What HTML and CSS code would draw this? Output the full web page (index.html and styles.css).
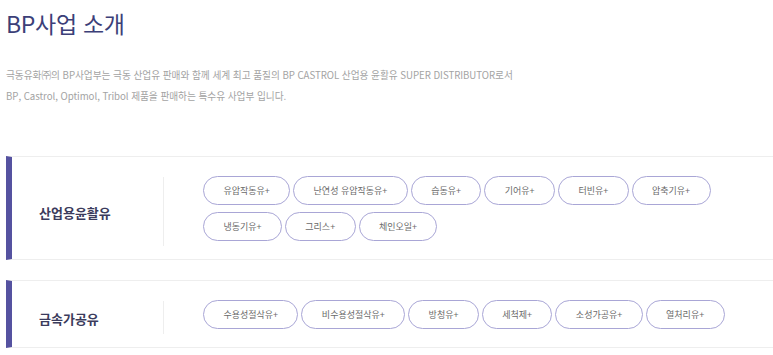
FILE: index.html
```html
<!DOCTYPE html>
<html lang="ko">
<head>
  <meta charset="UTF-8">
  <title>BP사업 소개</title>
  <meta name="viewport" content="width=device-width, initial-scale=1.0">
  <link rel="stylesheet" href="styles.css">
</head>
<body>
  <div class="page">
    <h2 class="title">BP사업 소개</h2>
    <p class="intro">
      극동유화㈜의 BP사업부는 극동 산업유 판매와 함께 세계 최고 품질의 BP CASTROL 산업용 윤활유 SUPER DISTRIBUTOR로서<br>
      BP, Castrol, Optimol, Tribol 제품을 판매하는 특수유 사업부 입니다.
    </p>

    <!-- Product groups -->
    <div class="group">
      <div class="group-name"><span>산업용윤활유</span></div>
      <ul class="pills">
        <li><a href="#">유압작동유+</a></li>
        <li><a href="#">난연성 유압작동유+</a></li>
        <li><a href="#">습동유+</a></li>
        <li><a href="#">기어유+</a></li>
        <li><a href="#">터빈유+</a></li>
        <li><a href="#">압축기유+</a></li>
        <li><a href="#">냉동기유+</a></li>
        <li><a href="#">그리스+</a></li>
        <li><a href="#">체인오일+</a></li>
      </ul>
    </div>

    <div class="group">
      <div class="group-name"><span>금속가공유</span></div>
      <ul class="pills">
        <li><a href="#">수용성절삭유+</a></li>
        <li><a href="#">비수용성절삭유+</a></li>
        <li><a href="#">방청유+</a></li>
        <li><a href="#">세척제+</a></li>
        <li><a href="#">소성가공유+</a></li>
        <li><a href="#">열처리유+</a></li>
      </ul>
    </div>
  </div>
</body>
</html>
```

FILE: styles.css
```css
body {
  margin: 0;
  padding: 0;
  font-family: "Noto Sans CJK KR", "Noto Sans", sans-serif;
  color: #333;
  background: #fff;
}

.page {
  padding: 0 0 0 6px;
}

/* Heading */
.title {
  margin: 0;
  padding-top: 6px;
  font-size: 23px;
  font-weight: 400;
  line-height: 34px;
  color: #3c3f78;
  letter-spacing: -0.3px;
}

.intro {
  margin: 25px 0 0;
  font-size: 9.7px;
  line-height: 21px;
  color: #a3a3a3;
  letter-spacing: -0.05px;
}

/* Product group box */
.group {
  display: flex;
  border-top: 1px solid #eeeeee;
  border-bottom: 1px solid #eeeeee;
  border-left: 6px solid #5552a0;
  margin-top: 20px;
}
.intro + .group {
  margin-top: 49px;
}

.group-name {
  flex: 0 0 152px;
  display: flex;
  align-items: center;
  margin: 20px 0 13px;
  padding-left: 27px;
  border-right: 1px solid #eeeeee;
  box-sizing: border-box;
}
.group-name span {
  font-size: 13px;
  font-weight: 700;
  color: #3b3b5c;
  margin-top: 1px;
}

.pills {
  list-style: none;
  margin: 0;
  padding: 19px 0 18px 39px;
  display: flex;
  flex-wrap: wrap;
  gap: 7px 3px;
  align-content: flex-start;
  max-width: 540px;
}
.pills a {
  display: block;
  box-sizing: border-box;
  height: 29px;
  line-height: 27px;
  padding: 0 19.4px;
  border: 1px solid #a9a6d6;
  border-radius: 15px;
  font-size: 9px;
  color: #6a6a6a;
  text-decoration: none;
  white-space: nowrap;
  text-align: center;
}
```
